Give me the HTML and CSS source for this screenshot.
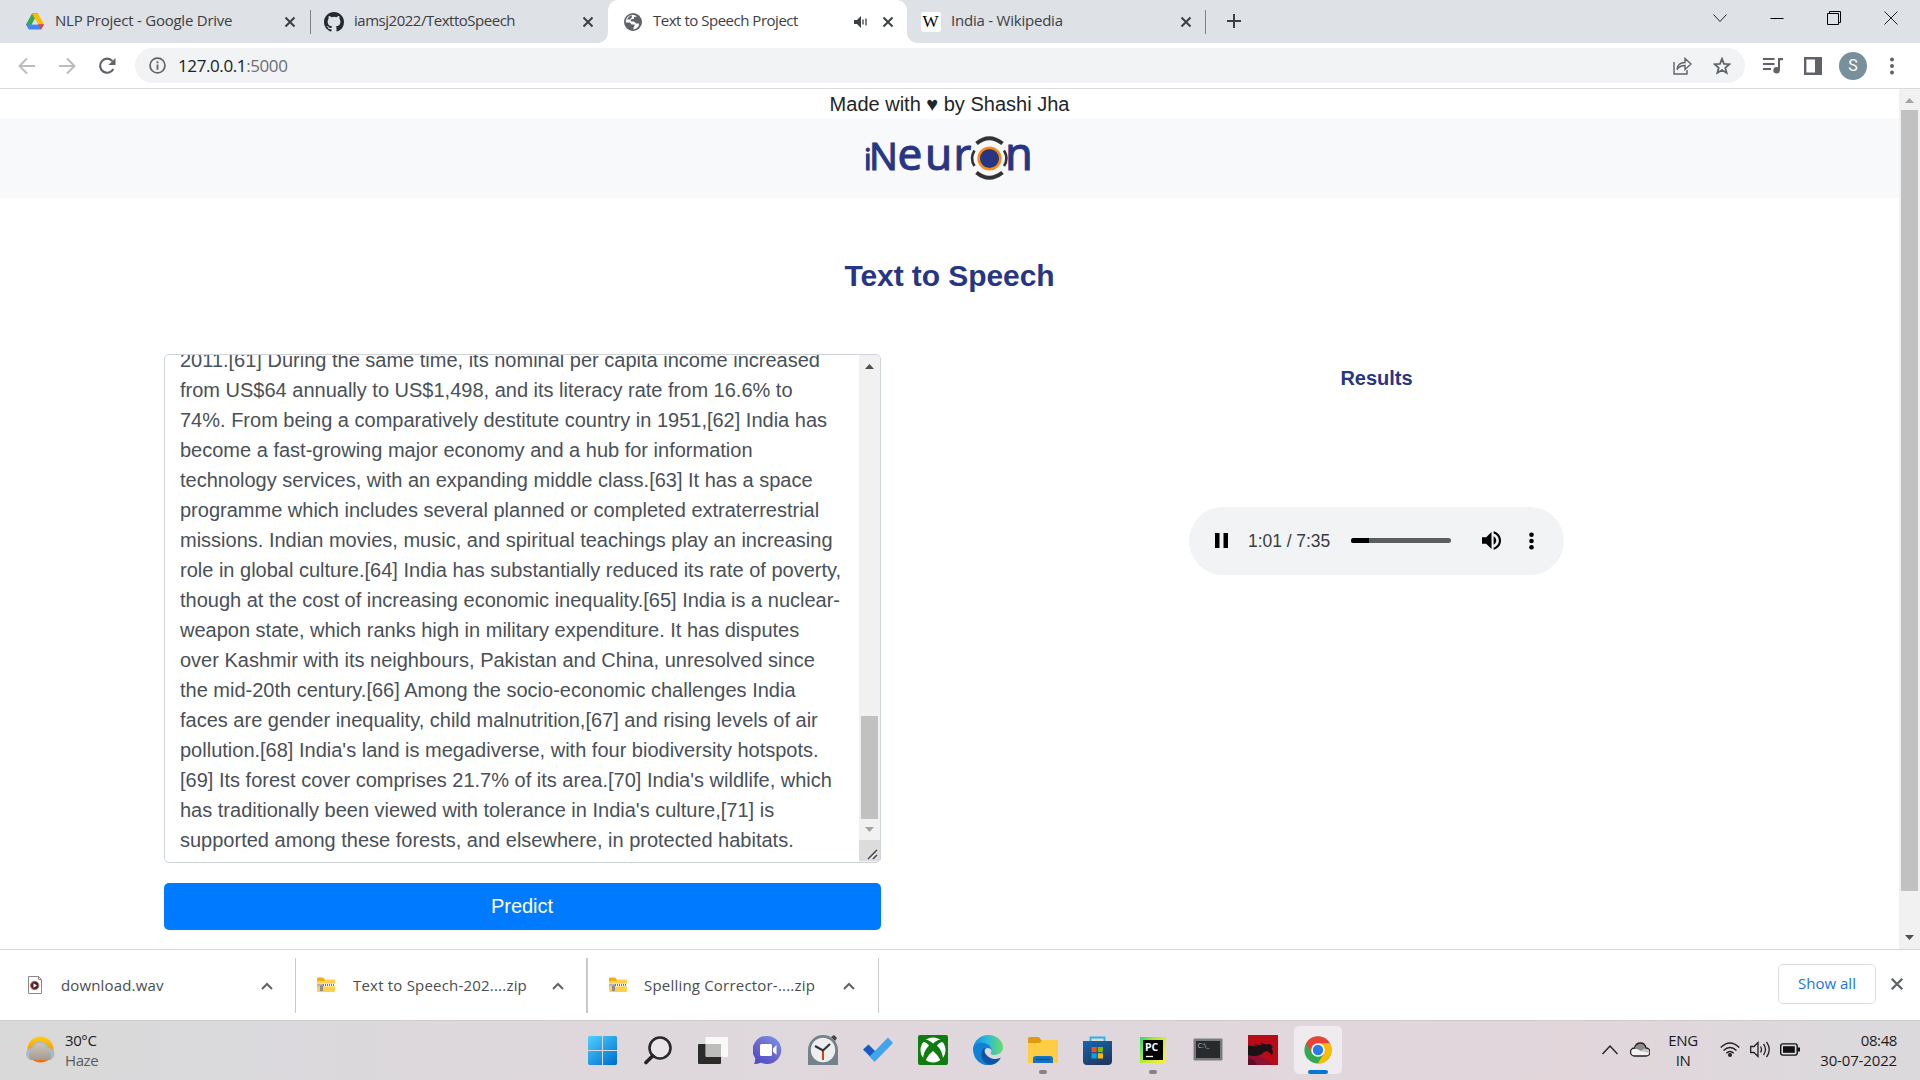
FILE: index.html
```html
<!DOCTYPE html>
<html lang="en">
<head>
<meta charset="utf-8">
<title>Text to Speech Project</title>
<link rel="stylesheet" href="styles.css">
</head>
<body>
<svg width="0" height="0" class="defs">
  <defs>
    <symbol id="x" viewBox="0 0 12 12"><path d="M1.5 1.5l9 9M10.5 1.5l-9 9" fill="none" stroke="currentColor" stroke-width="2"/></symbol>
    <symbol id="up" viewBox="0 0 12 8"><path d="M1 7l5-5 5 5" fill="none" stroke="currentColor" stroke-width="2"/></symbol>
    <symbol id="zip" viewBox="0 0 18 15">
      <path d="M0 1.500q0-1 1-1h5l2 2v2h-8z" fill="#f5ae12"/><path d="M0 4h7l2-1.500h9v11.500q0 1-1 1h-16q-1 0-1-1z" fill="#ffd04e"/>
      <path d="M0 8h18" stroke="#fff" stroke-width="2.600"/><path d="M0 8h18" stroke="#77777b" stroke-width="1.800" stroke-dasharray="1 1"/>
      <path d="M0 7h6v2.500h-6z" fill="#b4b4b4"/><path d="M3 8.500h3v5.500h-3z" fill="#8d8d8d"/>
    </symbol>
  </defs>
</svg>

<header class="tabs">
  <div class="tab t1">
    <svg class="fav" viewBox="0 0 18 16" width="18" height="17"><path d="M6 0h6l-3 5.300z" fill="#188038"/><path d="M6 0l3 5.300-6 10.700-3-5z" fill="#34a853"/><path d="M12 0l6 10.700h-6l-6-10.700z" fill="#fbbc04"/><path d="M0 11h18l-3 5h-12z" fill="#4285f4"/><path d="M12 10.700h6l-3 5.300z" fill="#ea4335"/><path d="M9 5.300l3.100 5.500h-6.200z" fill="#dee1e6"/></svg>
    <span class="label l1">NLP Project - Google Drive</span>
    <svg class="x" width="12" height="12"><use href="#x"/></svg>
  </div>
  <div class="tab t2">
    <svg class="fav" viewBox="0 0 16 16" width="20" height="20"><path fill="#24292f" d="M8 0C3.580 0 0 3.580 0 8c0 3.540 2.290 6.530 5.470 7.590.4.070.550-.170.550-.380 0-.190-.010-.820-.010-1.490-2.010.370-2.530-.490-2.690-.940-.090-.230-.480-.940-.820-1.130-.280-.150-.680-.520-.010-.530.630-.010 1.080.580 1.230.820.720 1.210 1.870.870 2.330.660.070-.520.280-.870.510-1.070-1.780-.2-3.640-.890-3.640-3.950 0-.870.310-1.590.820-2.150-.080-.2-.360-1.020.080-2.120 0 0 .670-.210 2.200.820a7.600 7.600 0 0 1 4 0c1.530-1.040 2.200-.820 2.200-.820.440 1.100.160 1.920.080 2.120.510.560.820 1.270.820 2.150 0 3.070-1.870 3.750-3.650 3.950.290.250.540.730.540 1.480 0 1.070-.010 1.930-.010 2.200 0 .210.150.460.550.380A8.010 8.010 0 0 0 16 8c0-4.420-3.580-8-8-8z"/></svg>
    <span class="label l2">iamsj2022/TexttoSpeech</span>
    <svg class="x" width="12" height="12"><use href="#x"/></svg>
  </div>
  <div class="tab active">
    <svg class="fav" viewBox="0 0 22 22" width="22" height="22"><circle cx="11" cy="11" r="9" fill="#5f6368"/><path d="M10 3.700q3 0 5 1.800l-3 .5v2h-2.500q-1.500 1-.5 2.500h3l2 2h3v2q-2 3.500-5.500 4v-2l1-1.500v-1.500h-3l-1.500-2h-4.200q-.3-5 4.200-7.300z" fill="#fff"/><path d="M4.500 12.500h3.500l2 2v3.500q-4-.5-5.500-5.500zM9.500 4q-3 1-4.500 4.500h3l2-2.500z" fill="#5f6368"/></svg>
    <span class="label l3">Text to Speech Project</span>
    <svg class="audio-on" viewBox="0 0 13 12" width="13" height="12"><path d="M0 4h3l4-4v12l-4-4h-3z" fill="#3c4043"/><path d="M9 3.500v5M12 2.500v7" stroke="#3c4043" stroke-width="1.300"/></svg>
    <svg class="x" width="12" height="12"><use href="#x"/></svg>
  </div>
  <div class="tab t4">
    <span class="wiki">W</span>
    <span class="label l4">India - Wikipedia</span>
    <svg class="x" width="12" height="12"><use href="#x"/></svg>
  </div>
  <svg class="plus" viewBox="0 0 14 14" width="14" height="14"><path d="M7 0v14M0 7h14" stroke="#3c4043" stroke-width="2"/></svg>
  <div class="window">
    <svg viewBox="0 0 14 14" width="14" height="14"><path d="M.5 3.500l6.500 7 6.500-7" fill="none" stroke="#222"/></svg>
    <svg viewBox="0 0 14 14" width="14" height="14"><path d="M.5 7.500h13" stroke="#000"/></svg>
    <svg viewBox="0 0 14 14" width="14" height="14"><path d="M.5 2.500h11v11h-11zM2.500 2.500v-2h11v11h-2" fill="none" stroke="#000"/></svg>
    <svg viewBox="0 0 14 14" width="14" height="14"><path d="M.5.5l13 13M13.500.5l-13 13" stroke="#222"/></svg>
  </div>
</header>

<div class="toolbar">
  <svg class="nav" viewBox="0 0 18 18" width="18" height="18"><path d="M17 9h-15M9 1.500l-7.500 7.500 7.500 7.500" fill="none" stroke="#babcbe" stroke-width="2"/></svg>
  <svg class="nav" viewBox="0 0 18 18" width="18" height="18"><path d="M1 9h15M9 1.500l7.500 7.500-7.500 7.500" fill="none" stroke="#babcbe" stroke-width="2"/></svg>
  <svg class="nav" viewBox="0 0 18 18" width="18" height="18"><path d="M15.300 12a7 7 0 1 1-1-8" fill="none" stroke="#5f6368" stroke-width="2.200"/><path d="M17.500 1v7h-7z" fill="#5f6368"/></svg>
  <div class="omni">
    <svg viewBox="0 0 16 16" width="17" height="17"><circle cx="8" cy="8" r="7" fill="none" stroke="#5f6368" stroke-width="1.600"/><path d="M8 7v5M8 4v1.800" stroke="#5f6368" stroke-width="1.700"/></svg>
    <span class="url">127.0.0.1<i>:5000</i></span>
    <svg class="share" viewBox="0 0 19 18" width="19" height="18"><path d="M1 5v12h13v-4M4 12.500c.5-5 4-7 8-7v-4l6 5.500-6 5.500v-4c-3 0-6 1-8 4z" fill="none" stroke="#5f6368" stroke-width="1.400"/></svg>
    <svg viewBox="0 0 18 18" width="18" height="18"><path d="M9 1.800l2 5 5.400.4-4.100 3.500 1.300 5.200-4.600-2.800-4.600 2.800 1.300-5.200-4.100-3.500 5.400-.4z" fill="none" stroke="#5f6368" stroke-width="1.800"/></svg>
  </div>
  <div class="tools">
    <svg viewBox="0 0 20 17" width="20" height="17"><path d="M0 2h11.500M0 7h11.500M0 12h8" stroke="#5f6368" stroke-width="2"/><path d="M15 13v-12h5v2.200h-3v10z" fill="#5f6368"/><circle cx="13.600" cy="13.300" r="3.200" fill="#5f6368"/></svg>
    <svg viewBox="0 0 18 18" width="18" height="18"><path d="M1.200 1.200h15.600v15.600h-15.600z" fill="none" stroke="#5f6368" stroke-width="2.400"/><path d="M11 1h6v16h-6z" fill="#5f6368"/></svg>
    <span class="avatar">S</span>
    <svg viewBox="0 0 4 18" width="4" height="18" fill="#5f6368"><circle cx="2" cy="2.500" r="2"/><circle cx="2" cy="9" r="2"/><circle cx="2" cy="15.500" r="2"/></svg>
  </div>
</div>

<div class="viewport">
  <main>
    <div class="made">Made with ♥ by Shashi Jha</div>
    <div class="brand">
      <svg class="logo" viewBox="0 0 172 64" width="172" height="64">
        <g fill="#283583" stroke="#283583" stroke-width="1">
          <text x="0" y="46" font-size="29">i</text><text x="5" y="46" font-size="38">N</text>
          <text x="33.500" y="46" font-size="44">e</text><text x="61" y="46" font-size="44">u</text><text x="89.500" y="46" font-size="43">r</text><text x="141" y="46" font-size="45">n</text>
        </g>
        <circle cx="125.500" cy="34.500" r="10.800" fill="#283583" stroke="#f88c12" stroke-width="2.600"/>
        <g fill="none" stroke="#333"><path d="M112.500 19.500q12.500-10.500 26 0M112.500 48.500q12.500 10.500 26 0" stroke-width="4"/><path d="M110.500 26.500q-5 8 0 15.500M140 26.500q5 8 0 15.500" stroke-width="2.600"/></g>
      </svg>
    </div>
    <h1>Text to Speech</h1>
    <div class="cols">
      <section class="left">
        <div class="area">
          <div class="words">
            <p>2011.[61] During the same time, its nominal per capita income increased</p>
            <p>from US$64 annually to US$1,498, and its literacy rate from 16.6% to</p>
            <p>74%. From being a comparatively destitute country in 1951,[62] India has</p>
            <p>become a fast-growing major economy and a hub for information</p>
            <p>technology services, with an expanding middle class.[63] It has a space</p>
            <p>programme which includes several planned or completed extraterrestrial</p>
            <p>missions. Indian movies, music, and spiritual teachings play an increasing</p>
            <p>role in global culture.[64] India has substantially reduced its rate of poverty,</p>
            <p>though at the cost of increasing economic inequality.[65] India is a nuclear-</p>
            <p>weapon state, which ranks high in military expenditure. It has disputes</p>
            <p>over Kashmir with its neighbours, Pakistan and China, unresolved since</p>
            <p>the mid-20th century.[66] Among the socio-economic challenges India</p>
            <p>faces are gender inequality, child malnutrition,[67] and rising levels of air</p>
            <p>pollution.[68] India's land is megadiverse, with four biodiversity hotspots.</p>
            <p>[69] Its forest cover comprises 21.7% of its area.[70] India's wildlife, which</p>
            <p>has traditionally been viewed with tolerance in India's culture,[71] is</p>
            <p>supported among these forests, and elsewhere, in protected habitats.</p>
          </div>
          <div class="bar">
            <svg class="arrow" viewBox="0 0 9 5" width="9" height="5"><path d="M0 5l4.500-5 4.500 5z" fill="#505050"/></svg>
            <div class="thumb"></div>
            <svg class="arrow down" viewBox="0 0 9 5" width="9" height="5"><path d="M0 0l4.500 5 4.500-5z" fill="#a3a3a3"/></svg>
            <svg class="grip" viewBox="0 0 21 21" width="21" height="21"><path d="M9 19l9-9M14 19l4-4" stroke="#444" stroke-width="1.500"/><path d="M10.500 19.500l8-8M15.500 19.500l3-3" stroke="#fff" stroke-width=".6"/></svg>
          </div>
        </div>
        <button class="predict">Predict</button>
      </section>
      <section class="right">
        <h2>Results</h2>
        <div class="player">
          <svg viewBox="0 0 13 15" width="13" height="15"><path d="M0 0h4.500v15h-4.500zM8.500 0h4.500v15h-4.500z"/></svg>
          <span class="time">1:01 / 7:35</span>
          <div class="track"><div class="played" style="width:18%"></div></div>
          <svg class="vol" viewBox="3 3 18 18" width="19" height="19"><path d="M3 9v6h4l5 5V4L7 9H3zm13.500 3c0-1.770-1.020-3.290-2.500-4.030v8.050c1.480-.730 2.500-2.250 2.500-4.020zM14 3.230v2.060c2.890.860 5 3.540 5 6.710s-2.110 5.850-5 6.710v2.060c4.010-.910 7-4.490 7-8.770s-2.990-7.860-7-8.770z"/></svg>
          <svg class="more" viewBox="0 0 5 18" width="5" height="18"><circle cx="2.500" cy="2.700" r="2.300"/><circle cx="2.500" cy="9" r="2.300"/><circle cx="2.500" cy="15.300" r="2.300"/></svg>
        </div>
      </section>
    </div>
  </main>
  <aside class="bar page-bar">
    <svg class="arrow" viewBox="0 0 9 5" width="9" height="5"><path d="M0 5l4.500-5 4.500 5z" fill="#a3a3a3"/></svg>
    <div class="thumb"></div>
    <svg class="arrow down" viewBox="0 0 9 5" width="9" height="5"><path d="M0 0l4.500 5 4.500-5z" fill="#505050"/></svg>
  </aside>
</div>

<div class="downloads">
  <div class="item i1">
    <svg class="ico" viewBox="0 0 14 18" width="14" height="18"><path d="M.5.5h10l3 3v14h-13z" fill="#fff" stroke="#8a8a8a"/><path d="M10.500.5v3h3" fill="none" stroke="#8a8a8a"/><circle cx="6.700" cy="9.500" r="4.200" fill="#41243d" stroke="#e2683a" stroke-width=".9"/><path d="M5.500 7.300l3.500 2.200-3.500 2.200z" fill="#fff"/></svg>
    <span class="name n1">download.wav</span><svg class="up" width="12" height="8"><use href="#up"/></svg>
  </div>
  <div class="item i2"><svg class="ico" width="18" height="15"><use href="#zip"/></svg><span class="name n2">Text to Speech-202....zip</span><svg class="up" width="12" height="8"><use href="#up"/></svg></div>
  <div class="item i3"><svg class="ico" width="18" height="15"><use href="#zip"/></svg><span class="name n3">Spelling Corrector-....zip</span><svg class="up" width="12" height="8"><use href="#up"/></svg></div>
  <button class="all">Show all</button>
  <svg class="close" width="14" height="14"><use href="#x"/></svg>
</div>

<footer class="taskbar">
  <div class="weather">
    <svg viewBox="0 0 30 28" width="30" height="28"><defs><linearGradient id="sun" x2="0" y2="1"><stop stop-color="#ffcf10"/><stop offset="1" stop-color="#ee6a10"/></linearGradient><linearGradient id="cl" x2="0" y2="1"><stop stop-color="#d9cdb0"/><stop offset="1" stop-color="#a39080"/></linearGradient></defs><circle cx="15.500" cy="13.500" r="13" fill="url(#sun)"/><path d="M7 24a6 6 0 0 1 0-12q1-6.500 8-6.500t8.500 6.500a6 6 0 0 1 0 12z" fill="#a9bac8"/><path d="M5 24q-3-10 4-10 0-7 6-7t6.500 7q6 1 4 10z" fill="url(#cl)" opacity=".75"/></svg>
    <div class="wtext"><b>30°C</b><span>Haze</span></div>
  </div>
  <nav class="apps">
    <div class="app"><svg viewBox="0 0 29 29" width="29" height="29"><defs><linearGradient id="win" gradientUnits="userSpaceOnUse" x1="0" y1="0" x2="24" y2="29"><stop stop-color="#4fd2ff"/><stop offset="1" stop-color="#0073d4"/></linearGradient></defs><path d="M1 0h13v14h-14v-13zM15 0h13l1 1v13h-14zM0 15h14v14h-13l-1-1zM15 15h14v13l-1 1h-13z" fill="url(#win)"/></svg></div>
    <div class="app"><svg viewBox="0 0 30 30" width="30" height="30"><circle cx="17" cy="13" r="10.500" fill="#e9e5e8" stroke="#292929" stroke-width="2.600"/><path d="M9.500 21l-6.500 6.500" stroke="#222" stroke-width="3.600" stroke-linecap="round"/></svg></div>
    <div class="app"><svg viewBox="0 0 30 30" width="30" height="30"><rect y="9" width="23" height="20" rx="1" fill="#2b2b2a"/><rect x="7.500" y="2" width="22.500" height="20" rx="1" fill="#fff" fill-opacity=".85"/><path d="M8 9h15v13h-15z" fill="#bdbdbc"/></svg></div>
    <div class="app"><svg viewBox="0 0 30 30" width="30" height="30"><defs><linearGradient id="chat" x1="1" x2=".3" y2="1"><stop stop-color="#719cf0"/><stop offset=".45" stop-color="#7170d0"/><stop offset="1" stop-color="#4f4fc6"/></linearGradient></defs><path d="M15 1a14 14 0 1 1-7 26.500q-3 1.500-7 1.500 1.500-3 1.200-6a14 14 0 0 1 12.800-22z" fill="url(#chat)"/><rect x="7" y="9" width="12" height="12" rx="1.500" fill="#fff"/><path d="M20 13.500l3.500-3.500v10l-3.500-3.500z" fill="#fff"/></svg></div>
    <div class="app"><svg viewBox="0 0 30 30" width="30" height="30"><path d="M23 2l3-2 3 3-2 3z" fill="#444"/><path d="M0 15a15 15 0 0 1 30 0v15h-30z" fill="#74808a"/><circle cx="15" cy="15" r="12.200" fill="#eceef0"/><path d="M15 15v10" stroke="#e04010" stroke-width="2"/><path d="M7 11l8 4.500 7-6.500" fill="none" stroke="#333" stroke-width="2.200"/></svg></div>
    <div class="app"><svg viewBox="0 0 30 30" width="30" height="30"><path d="M0 14.500l5.500-5 8 8-5 5.500z" fill="#185abd"/><path d="M6.500 21.500l18.500-19 5 5.500-18.500 19z" fill="#41a5ee"/></svg></div>
    <div class="app"><svg viewBox="0 0 30 30" width="30" height="30"><rect width="30" height="30" rx="2" fill="#107c10"/><circle cx="15" cy="15" r="12.500" fill="#fff"/><path d="M6 4.500q4-.5 9 4 5-4.500 9-4l2 3q-3-2-7 3 6 6 6 14.500l-2 2q-2-6-8-11-6 5-8 11l-2-2q0-8.500 6-14.500-4-5-7-3z" fill="#107c10"/></svg></div>
    <div class="app"><svg viewBox="0 0 30 30" width="30" height="30"><defs><linearGradient id="e1"><stop stop-color="#168bdc"/><stop offset=".45" stop-color="#2ab8df"/><stop offset="1" stop-color="#68dd68"/></linearGradient></defs><path d="M0 14c1-9 8-14 15-14 10 0 15 7 15 12 0 6-5 8-9 8-3 0-4-1-3-2.500 3-6-3-7-7-6.500-5 .5-9 2-11 3z" fill="url(#e1)"/><path d="M0 14c1-5 6-7 10-6 5 0 9 4 9 8-2-4-7-4-8 1-1 6 2 10 8 13-10 2-19-5-19-16z" fill="#1380d8"/><path d="M10 14c-5 9 2 17 10 15.500q5-1.500 8-7c-6 3-12 1-14.500-2.500q-3-3-1.500-7z" fill="#0c55a4"/></svg></div>
    <div class="app"><svg viewBox="0 0 30 30" width="30" height="30"><path d="M0 4q0-2 2-2h8q2 0 3 3h17v8h-30z" fill="#e09b0d"/><path d="M0 8h12l2-3h16v23h-30z" fill="#ffcd43"/><path d="M5 28v-4q0-3 3-3h14q3 0 3 3v4z" fill="#1473c4"/><path d="M8 24.500h14" stroke="#0a4f92" stroke-width="1.400"/></svg><i></i></div>
    <div class="app"><svg viewBox="0 0 30 30" width="30" height="30"><defs><linearGradient id="st" x2=".5" y2="1"><stop stop-color="#1168b0"/><stop offset="1" stop-color="#213a63"/></linearGradient></defs><path d="M7.500 7v-4.500h14v4.500" fill="none" stroke="#25b4ec" stroke-width="1.800"/><path d="M0 6h29v20q0 4-4 4h-21q-4 0-4-4z" fill="url(#st)"/><path d="M8.500 12h5.200v5.200h-5.200z" fill="#f25022"/><path d="M14.800 12h5.200v5.200h-5.200z" fill="#7fba00"/><path d="M8.500 18.300h5.200v5.200h-5.200z" fill="#00a4ef"/><path d="M14.800 18.300h5.200v5.200h-5.200z" fill="#ffb900"/></svg></div>
    <div class="app"><svg viewBox="0 0 26 26" width="26" height="26"><defs><linearGradient id="pc" x2="1" y2=".6"><stop stop-color="#20dd70"/><stop offset=".45" stop-color="#b0ea32"/><stop offset="1" stop-color="#f2ed3c"/></linearGradient></defs><path d="M0 0h26v26h-26z" fill="url(#pc)"/><path d="M3 3h20v20h-20z"/><text x="5" y="13.500" font-size="10.500" font-weight="bold" fill="#fff">PC</text><path d="M6 19.500h7" stroke="#fff" stroke-width="1.300"/></svg><i></i></div>
    <div class="app"><svg viewBox="0 0 30 30" width="30" height="30"><rect x=".5" y="3.500" width="29" height="22" rx="1.500" fill="#77797b" stroke="#a9abad"/><path d="M3 6h24v17h-24z" fill="#292a2c"/><text x="4.500" y="13" font-size="7" fill="#bbb">C:\_</text></svg></div>
    <div class="app"><svg viewBox="0 0 30 30" width="30" height="30"><path d="M0 0h30v30h-30z" fill="#b80a17"/><path d="M0 15q8 0 11 6l10 5 3 4h-24z" fill="#8c1032"/><path d="M0 10.500l9 1-3-2 8 .5-2-2.500 6 2 4-.5 3 3-1.500 1 1.500 4-1 3.500-2-2.500-3-2-3 1q-5 6-16 3z" fill="#1b1216"/><path d="M0 24q5-2 9 6h-9z" fill="#5c0f28"/></svg></div>
    <div class="app on"><svg viewBox="0 0 28 28" width="28" height="28"><circle cx="14" cy="14" r="13.600" fill="#34a853"/><path d="M2.200 7.200a13.600 13.600 0 0 1 23.600 0h-11.800l-6 10.200z" fill="#ea4335"/><path d="M25.800 7.200a13.600 13.600 0 0 1-12 20.400l6-10.200-5.800-10.200z" fill="#fbbc04"/><circle cx="14" cy="14" r="6.800" fill="#fff"/><circle cx="14" cy="14" r="5.200" fill="#2a7bea"/></svg><i></i></div>
  </nav>
  <div class="tray">
    <svg viewBox="0 0 16 10" width="16" height="10"><path d="M.5 9l7.500-8 7.500 8" fill="none" stroke="#222" stroke-width="1.400"/></svg>
    <svg class="cloud" viewBox="0 0 20 15" width="20" height="15"><path d="M4.500 14a4 4 0 0 1 0-8q1.500-5 6-5t5.500 5a4 4 0 0 1 0 8z" fill="#f2f2f2"/><path d="M3 7q1.500-1 2.500-1 1.500-5 5-5t5.500 5l-5 3-4-2z" fill="#8a8a8a"/><path d="M11 9l5-3q3.500 1 3 5z" fill="#c4c4c4"/><path d="M4.500 14a4 4 0 0 1 0-8q1.500-5 6-5t5.500 5a4 4 0 0 1 0 8z" fill="none" stroke="#222" stroke-width="1.300"/></svg>
    <div class="lang"><span>ENG</span><span>IN</span></div>
    <svg class="wifi" viewBox="0 0 20 15" width="20" height="15"><path d="M.7 5.500q9.300-9 18.600 0M3.500 8.500q6.500-6 13 0M6.300 11.300q3.700-3.500 7.400 0" fill="none" stroke="#222" stroke-width="1.400"/><circle cx="10" cy="13" r="2" fill="#222"/></svg>
    <svg class="snd" viewBox="0 0 20 17" width="20" height="17"><path d="M.7 5.500h3.300l4-4v14l-4-4h-3.300zM10.500 5.500q2 3 0 6M13.500 3q4 5.500 0 11M16.500.8q5.500 7.700 0 15.400" fill="none" stroke="#222" stroke-width="1.300"/></svg>
    <svg class="bat" viewBox="0 0 20 13" width="20" height="13"><rect x=".7" y=".9" width="16.500" height="11.200" rx="2" fill="none" stroke="#111" stroke-width="1.400"/><path d="M3 3.200h11.800v6.600h-11.800z" fill="#111"/><path d="M17.500 4.500h2.500v4h-2.500z" fill="#111"/></svg>
    <div class="clock"><span class="hm">08:48</span><span class="date">30-07-2022</span></div>
  </div>
</footer>
</body>
</html>
```
FILE: styles.css
```css
* { box-sizing: border-box; }
body { margin: 0; width: 1920px; height: 1080px; overflow: hidden; display: flex; flex-direction: column; background: #fff; font-family: "Open Sans", "Noto Sans", sans-serif; font-size: 15px; color: #3c4043; }
svg { display: block; flex: none; }
.defs { position: absolute; }
p, h1, h2 { margin: 0; }
button { font-family: inherit; padding: 0; }

.tabs { flex: none; height: 43px; background: #dee1e6; display: flex; align-items: stretch; }
.tab { display: flex; align-items: center; height: 43px; position: relative; }
.label { margin-left: 10px; flex: 1; white-space: nowrap; line-height: 20px; padding-bottom: 3px; }
.l1 { letter-spacing: -.24px; margin-left: 11px; }
.l2, .l3 { letter-spacing: -.48px; }
.l4 { letter-spacing: -.22px; }
.t1 { width: 311px; padding: 0 15px 0 26px; }
.t1::after, .t4::after { content: ""; position: absolute; right: 0; top: 10px; width: 1px; height: 24px; background: #808387; }
.t2 { width: 297px; padding: 0 14px 0 13px; }
.active { width: 299px; padding: 0 13px 0 14px; background: #fff; border-radius: 10px 10px 0 0; }
.active .label { margin-left: 9px; }
.active::before, .active::after { content: ""; position: absolute; bottom: 0; width: 10px; height: 10px; }
.active::before { left: -10px; background: radial-gradient(circle at 0 0, transparent 9.5px, #fff 10px); }
.active::after { right: -10px; background: radial-gradient(circle at 100% 0, transparent 9.5px, #fff 10px); }
.audio-on { margin-right: 15px; }
.t4 { width: 299px; padding: 0 14px 0 14px; }
.wiki { width: 20px; height: 20px; background: #fff; border-radius: 3px; color: #000; font: 17px/20px "Liberation Serif", serif; text-align: center; text-indent: -1px; }
.plus { margin: 14px 0 0 21px; }
.window { margin-left: auto; display: flex; gap: 43px; padding: 11px 22px 0 0; }

.toolbar { flex: none; height: 46px; border-bottom: 1px solid #dadce0; display: flex; align-items: center; padding-left: 18px; }
.nav { margin-right: 22px; }
.nav + .nav + .nav { margin-right: 18px; }
.omni { width: 1610px; height: 35px; border-radius: 18px; background: #f1f3f4; display: flex; align-items: center; padding: 0 14px; margin-left: 1px; }
.url { margin-left: 12px; font-size: 17px; color: #202124; letter-spacing: -.4px; }
.url i { font-style: normal; color: #6b6f73; }
.share { margin-left: auto; margin-right: 21px; }
.tools { display: flex; align-items: center; gap: 21px; margin-left: 18px; }
.avatar { width: 28px; height: 28px; border-radius: 50%; background: #78909c; color: #fff; text-align: center; font: 16px/28px Roboto, sans-serif; }
.tools .avatar { margin-left: -4px; margin-right: 2px; }

.viewport { flex: none; height: 860px; display: flex; font-family: "Liberation Sans", sans-serif; font-size: 20px; line-height: 30px; }
main { width: 1899px; }
.made { height: 30px; text-align: center; color: #212529; }
.brand { height: 79px; background: #f8f9fa; padding-top: 5px; display: flex; justify-content: center; align-items: flex-start; }
.logo { font-family: "Noto Sans", sans-serif; overflow: visible; }
h1 { color: #283583; font-size: 30px; line-height: 36px; text-align: center; padding-top: 60px; letter-spacing: -.08px; }
.cols { display: flex; padding: 60px 0 0 164px; align-items: flex-start; }
.left { width: 717px; }
.area { height: 509px; border: 1px solid #ced4da; border-radius: 5px; overflow: hidden; display: flex; justify-content: space-between; background: #fff; color: #495057; }
.words { margin: -10px 0 0 15px; white-space: nowrap; }
.bar { width: 21px; background: #f1f1f1; display: flex; flex-direction: column; align-items: center; }
.arrow { margin: 9px 0 0; }
.thumb { width: 17px; background: #c1c1c1; }
.area .thumb { height: 103px; margin-top: 347px; }
.area .down { margin: 8px 0 8px; }
.grip { background: #dcdcdc; }
.predict { display: block; width: 717px; height: 47px; margin-top: 20px; border: 0; border-radius: 5px; background: #007bff; color: #fff; font-size: 20px; padding-right: 1px; }
.right { width: 991px; display: flex; flex-direction: column; align-items: center; }
h2 { color: #283583; font-size: 20px; line-height: 24px; margin-top: 12px; }
.player { width: 375px; height: 68px; margin-top: 117px; border-radius: 34px; background: #f1f3f4; display: flex; align-items: center; padding: 0 0 1px 26px; }
.time { margin-left: 20px; width: 103px; font-size: 17.500px; letter-spacing: -.05px; color: #3b3c3e; white-space: nowrap; }
.track { width: 100px; height: 5px; border-radius: 3px; background: #5c5d5d; overflow: hidden; }
.played { height: 5px; background: #000; }
.vol { margin-left: 31px; }
.more { margin-left: 28px; }
.page-bar .thumb { height: 781px; margin-top: 7px; }
.page-bar .down { margin-top: 44px; }

.downloads { flex: none; height: 71px; border-top: 1px solid #d5d6d8; display: flex; padding-top: 8px; color: #4a4c50; }
.item { height: 55px; border-right: 1px solid #c8c9cb; display: flex; align-items: center; }
.ico { margin-bottom: 2px; }
.name { margin-left: 18px; flex: 1; white-space: nowrap; padding-bottom: 2px; }
.i1 { width: 296px; padding: 0 22px 0 28px; }
.n1 { margin-left: 19px; letter-spacing: .15px; }
.i2 { width: 292px; padding: 0 22px 0 21px; border-right-width: 2px; }
.n2, .n3 { letter-spacing: .2px; }
.i3 { width: 291px; padding: 0 23px 0 21px; }
.n3 { margin-left: 17px; }
.all { margin: 6px 0 0 auto; width: 98px; height: 40px; border: 1px solid #dadce0; border-radius: 5px; background: #fff; color: #1a73e8; font-size: 15px; padding-bottom: 2px; }
.close { margin: 19px 16px 0 14px; color: #5f6368; }
.up { color: #5f6368; }

.taskbar { flex: 1; display: flex; background: linear-gradient(90deg, #d9d9d9 0, #dad9dc 12%, #ded8dc 30%, #e0d7dc 60%, #e2d6db 82%, #dcd9dd 95%, #dcd9dc); color: #1c1c1c; line-height: 20px; border-top: 1px solid #cccacb; }
.weather { display: flex; width: 575px; padding: 15px 0 0 25px; gap: 10px; }
.wtext { margin-top: -6px; display: flex; flex-direction: column; }
.wtext b { font-weight: normal; letter-spacing: -.4px; }
.wtext span { color: #5c5b5c; letter-spacing: -.4px; }
.apps { display: flex; }
.app { width: 55px; height: 58px; display: flex; justify-content: center; align-items: center; position: relative; }
.app i { position: absolute; bottom: 5px; left: 24px; width: 8px; height: 4px; border-radius: 2px; background: #858185; }
.app.on::before { content: ""; position: absolute; left: 4px; top: 5px; width: 48px; height: 48px; border-radius: 5px; background: #f0ebee; }
.app.on svg { position: relative; }
.app.on i { left: 18px; width: 20px; background: #0078d4; }
.tray { display: flex; margin-left: auto; padding: 0 23px 2px 0; align-items: center; }
.cloud { margin-left: 12px; }
.lang { margin-left: 19px; width: 28px; display: flex; flex-direction: column; align-items: center; letter-spacing: -.4px; }
.wifi { margin-left: 23px; }
.snd, .bat { margin-left: 10px; }
.clock { width: 97px; display: flex; flex-direction: column; align-items: flex-end; letter-spacing: -.4px; white-space: nowrap; }
.date { letter-spacing: -.15px; }
```
